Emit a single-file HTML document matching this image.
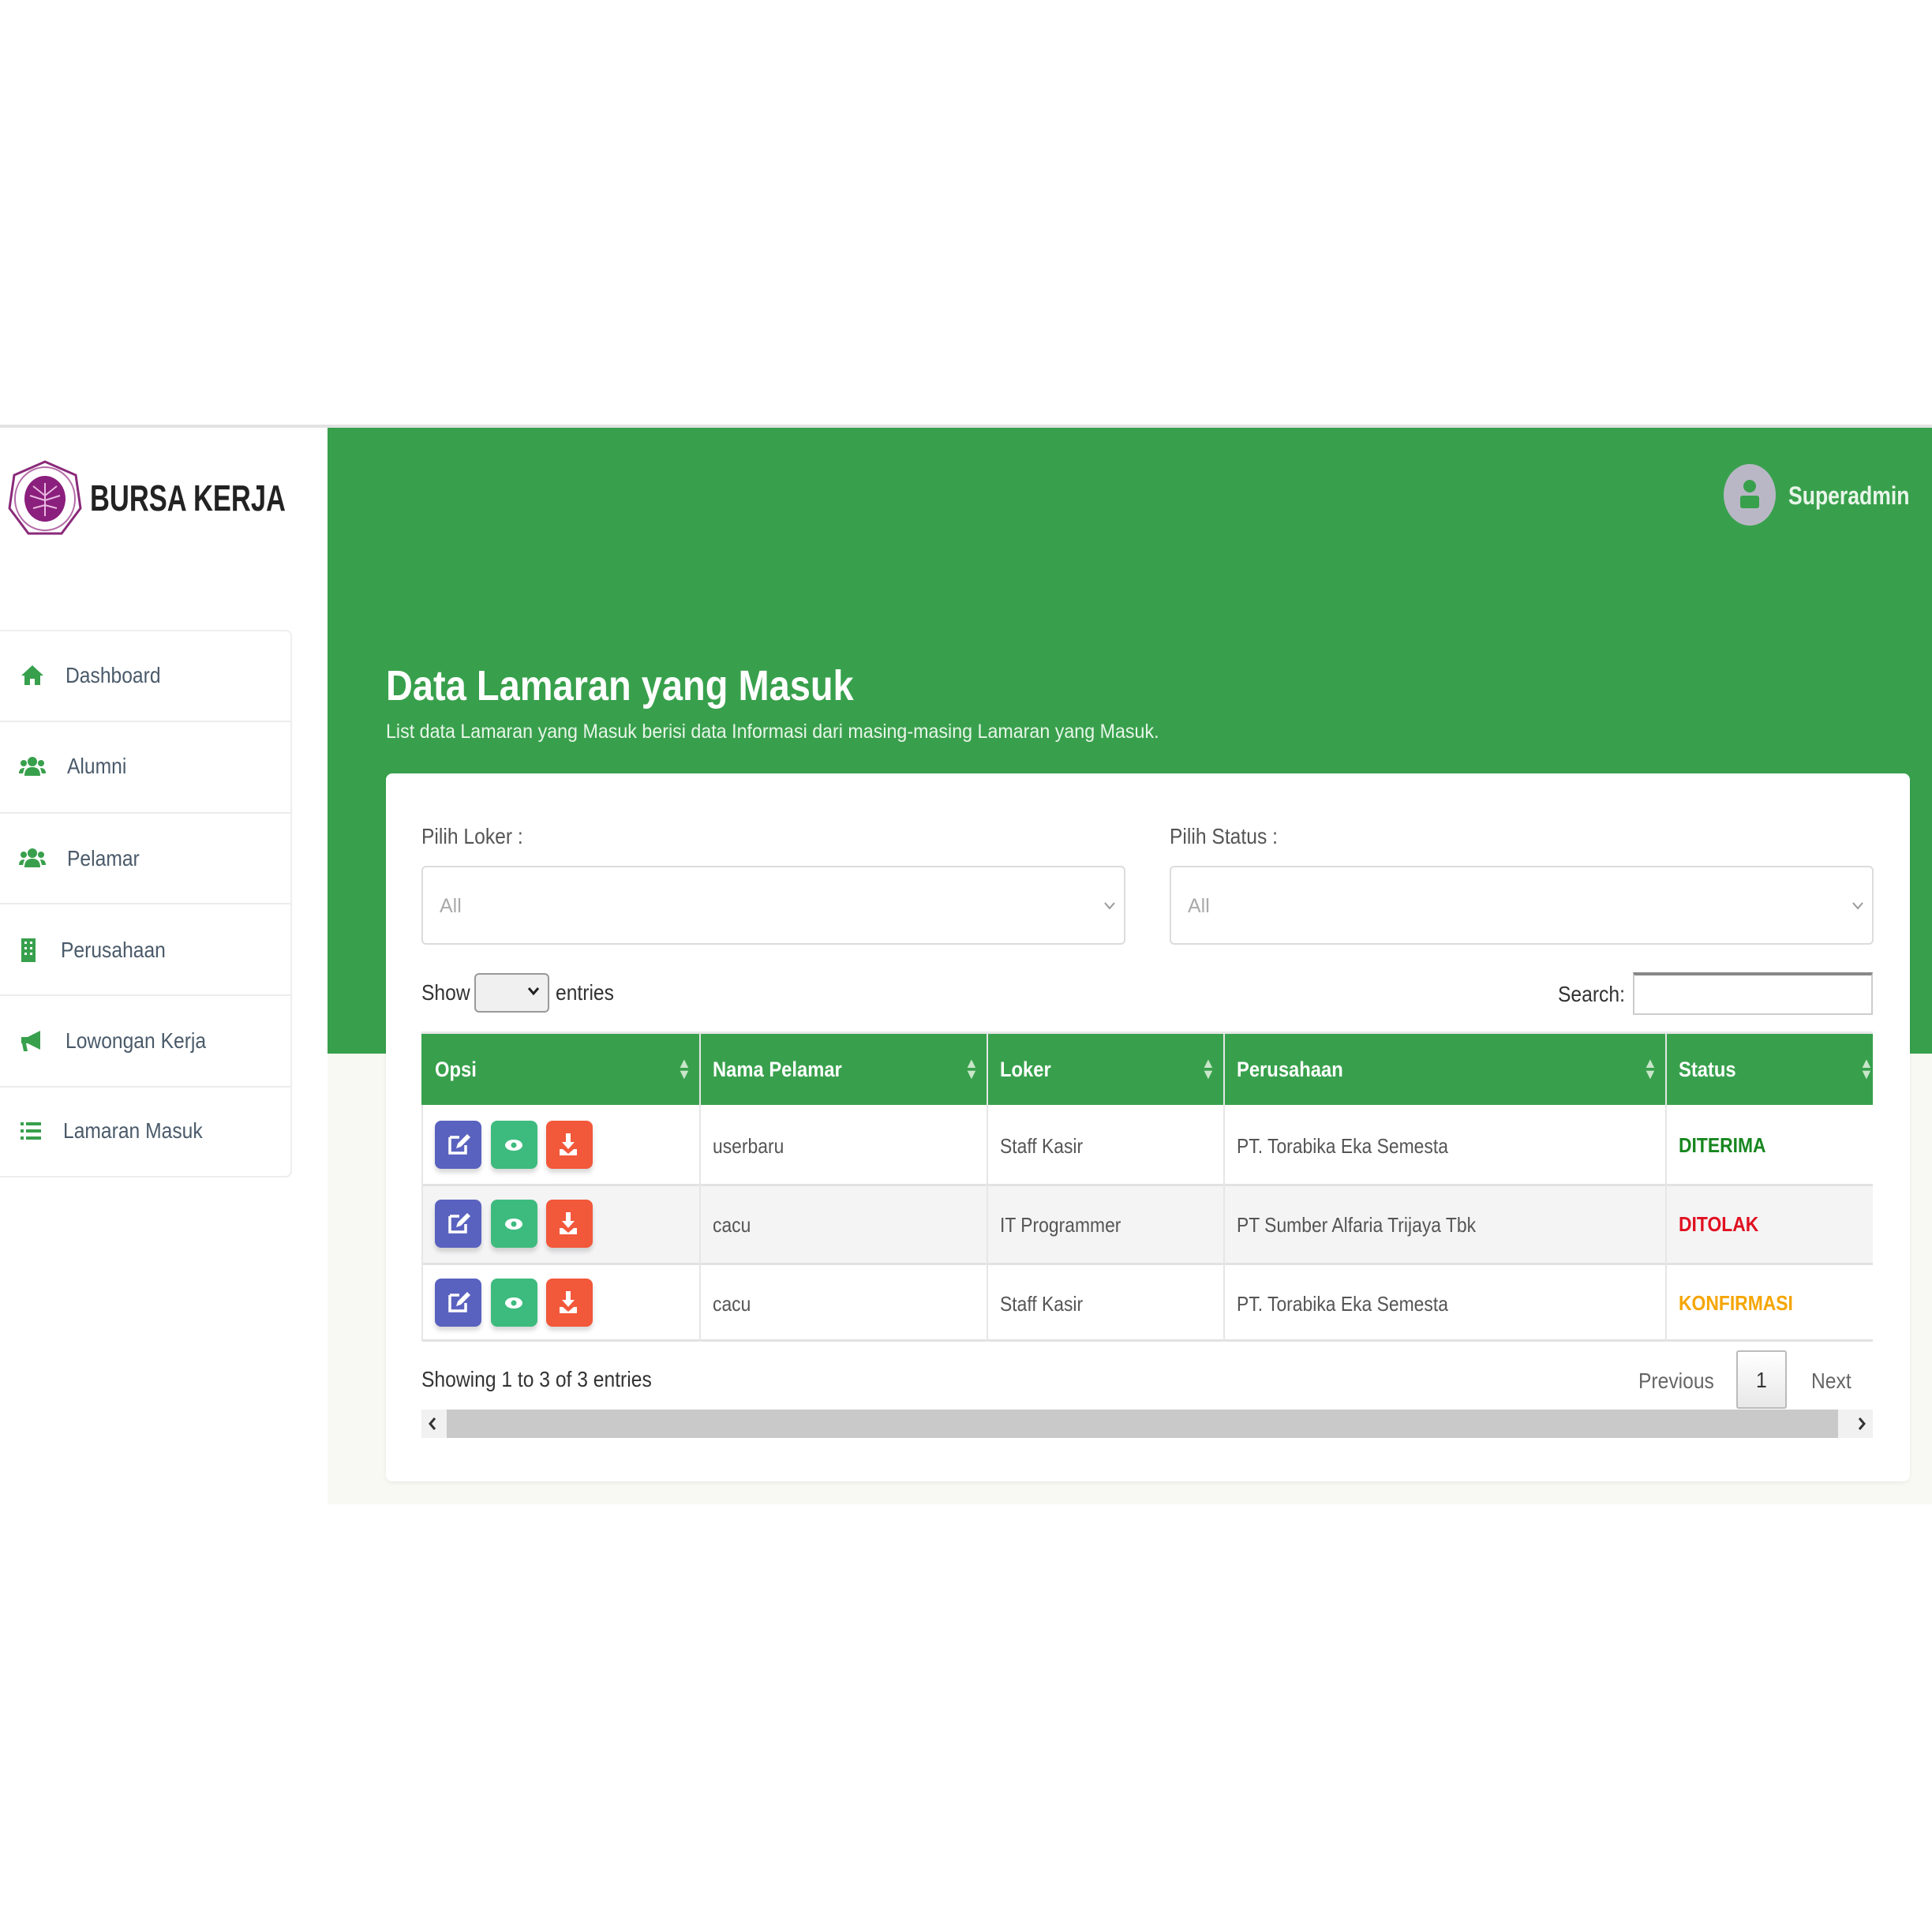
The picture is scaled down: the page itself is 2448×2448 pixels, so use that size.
<!DOCTYPE html>
<html><head><meta charset="utf-8"><style>
*{margin:0;padding:0;box-sizing:border-box}
body{width:2448px;height:2448px;background:#fff;position:relative;overflow:hidden;font-family:"Liberation Sans",sans-serif;color:#555}
.a{position:absolute;white-space:nowrap}
.n{transform:scaleX(.88);transform-origin:0 0}
.topline{left:0;top:538px;width:2448px;height:4px;background:#e2e2e2}
.green{left:415px;top:542px;width:2033px;height:793px;background:#38a04c}
.beige{left:415px;top:1335px;width:2033px;height:571px;background:#f8f9f3}
.menu{left:0;top:798px;width:370px;height:694px;background:#fff;border:2px solid #eeeeee;border-left:none;border-radius:0 8px 8px 0}
.mi{left:0;width:368px;height:2px;background:#ececec}
.mt{font-size:28px;color:#4a5a6a;transform:translateY(-50%) scaleX(.88);transform-origin:0 50%}
.card{left:489px;top:980px;width:1931px;height:897px;background:#fff;border-radius:8px;box-shadow:0 2px 6px rgba(0,0,0,.06)}
.lbl{font-size:28px;color:#555;transform:scaleX(.88);transform-origin:0 0}
.sel{border:2px solid #dcdcdc;border-radius:6px;height:100px;background:#fff}
.th{color:#fff;font-weight:bold;font-size:27px;top:1340px;transform:scaleX(.88);transform-origin:0 0}
.td{font-size:26px;color:#555;transform:scaleX(.88);transform-origin:0 0}
.btn{width:59px;height:61px;border-radius:8px;box-shadow:0 5px 6px rgba(0,0,0,.15)}
.vl{width:2px;background:#e6e6e6}
.sort{color:#c8e6c9;font-size:18px;line-height:14px;text-align:center}
</style></head><body>
<div class="a topline"></div>
<div class="a green"></div>
<div class="a beige"></div>

<svg class="a" style="left:8px;top:582px" width="98" height="100" viewBox="0 0 98 100">
<path d="M49 3 L88 20 L94 62 L70 94 L28 94 L4 62 L10 20 Z" fill="#fff" stroke="#8a2a7a" stroke-width="3"/>
<ellipse cx="49" cy="50" rx="38" ry="40" fill="none" stroke="#b46aa8" stroke-width="2"/>
<ellipse cx="49" cy="50" rx="26" ry="29" fill="#8b1f7d"/>
<path d="M49 30 L49 72 M49 46 L34 34 M49 46 L64 34 M49 52 L30 46 M49 52 L68 46 M49 58 L34 62 M49 58 L64 62" stroke="#e8b8e0" stroke-width="2"/>
</svg>
<div class="a" style="left:114px;top:604px;font-size:46px;font-weight:bold;color:#222;transform:scaleX(.75);transform-origin:0 0">BURSA KERJA</div>

<div class="a" style="left:2184px;top:588px;width:66px;height:78px;border-radius:50%;background:#b9b7c6"></div>
<svg class="a" style="left:2203px;top:606px" width="28" height="42" viewBox="0 0 28 42"><circle cx="14" cy="10" r="8" fill="#38a04c"/><rect x="2" y="22" width="24" height="16" rx="3" fill="#38a04c"/></svg>
<div class="a" style="left:2266px;top:610px;font-size:32px;font-weight:bold;color:#e8f5e9;transform:scaleX(.83);transform-origin:0 0">Superadmin</div>

<div class="a menu"></div>
<div class="a mi" style="top:913px"></div>
<div class="a mi" style="top:1029px"></div>
<div class="a mi" style="top:1144px"></div>
<div class="a mi" style="top:1260px"></div>
<div class="a mi" style="top:1376px"></div>
<svg class="a" style="left:26px;top:841px" width="30" height="28" viewBox="0 0 30 28"><path d="M15 2 L29 15 L25 15 L25 27 L18 27 L18 19 L12 19 L12 27 L5 27 L5 15 L1 15 Z" fill="#38a04c"/></svg>
<div class="a mt" style="left:83px;top:856px">Dashboard</div>
<svg class="a" style="left:24px;top:958px" width="34" height="26" viewBox="0 0 34 26"><circle cx="17" cy="7" r="6" fill="#38a04c"/><circle cx="6" cy="9" r="4" fill="#38a04c"/><circle cx="28" cy="9" r="4" fill="#38a04c"/><path d="M7 25 Q7 14 17 14 Q27 14 27 25Z M0 22 Q0 15 7 15 L5 22Z M34 22 Q34 15 27 15 L29 22Z" fill="#38a04c"/></svg>
<div class="a mt" style="left:85px;top:971px">Alumni</div>
<svg class="a" style="left:24px;top:1074px" width="34" height="26" viewBox="0 0 34 26"><circle cx="17" cy="7" r="6" fill="#38a04c"/><circle cx="6" cy="9" r="4" fill="#38a04c"/><circle cx="28" cy="9" r="4" fill="#38a04c"/><path d="M7 25 Q7 14 17 14 Q27 14 27 25Z M0 22 Q0 15 7 15 L5 22Z M34 22 Q34 15 27 15 L29 22Z" fill="#38a04c"/></svg>
<div class="a mt" style="left:85px;top:1088px">Pelamar</div>
<svg class="a" style="left:27px;top:1189px" width="18" height="30" viewBox="0 0 18 30"><rect width="18" height="30" fill="#38a04c"/><rect x="4" y="4" width="3" height="3" fill="#fff"/><rect x="11" y="4" width="3" height="3" fill="#fff"/><rect x="4" y="11" width="3" height="3" fill="#fff"/><rect x="11" y="11" width="3" height="3" fill="#fff"/><rect x="4" y="18" width="3" height="3" fill="#fff"/><rect x="11" y="18" width="3" height="3" fill="#fff"/></svg>
<div class="a mt" style="left:77px;top:1204px">Perusahaan</div>
<svg class="a" style="left:25px;top:1305px" width="30" height="28" viewBox="0 0 30 28"><path d="M2 9 L10 9 L26 1 L26 25 L10 17 L8 17 L10 27 L5 27 L3 17 L2 17 Z" fill="#38a04c"/></svg>
<div class="a mt" style="left:83px;top:1319px">Lowongan Kerja</div>
<svg class="a" style="left:26px;top:1422px" width="26" height="22" viewBox="0 0 26 22"><g fill="#38a04c"><rect width="4" height="4"/><rect y="9" width="4" height="4"/><rect y="18" width="4" height="4"/><rect x="7" width="19" height="4"/><rect x="7" y="9" width="19" height="4"/><rect x="7" y="18" width="19" height="4"/></g></svg>
<div class="a mt" style="left:80px;top:1433px">Lamaran Masuk</div>

<div class="a" style="left:489px;top:838px;font-size:54px;font-weight:bold;color:#fff;transform:scaleX(.87);transform-origin:0 0">Data Lamaran yang Masuk</div>
<div class="a" style="left:489px;top:913px;font-size:25px;color:#e8f5e9;transform:scaleX(.93);transform-origin:0 0">List data Lamaran yang Masuk berisi data Informasi dari masing-masing Lamaran yang Masuk.</div>

<div class="a card"></div>
<div class="a lbl" style="left:534px;top:1044px">Pilih Loker :</div>
<div class="a lbl" style="left:1482px;top:1044px">Pilih Status :</div>
<div class="a sel" style="left:534px;top:1097px;width:892px"></div>
<div class="a sel" style="left:1482px;top:1097px;width:892px"></div>
<div class="a" style="left:557px;top:1134px;font-size:25px;color:#aaa">All</div>
<div class="a" style="left:1505px;top:1134px;font-size:25px;color:#aaa">All</div>
<svg class="a" style="left:1398px;top:1142px" width="16" height="12" viewBox="0 0 16 12"><path d="M2 2 L8 9 L14 2" stroke="#999" stroke-width="2" fill="none"/></svg>
<svg class="a" style="left:2346px;top:1142px" width="16" height="12" viewBox="0 0 16 12"><path d="M2 2 L8 9 L14 2" stroke="#999" stroke-width="2" fill="none"/></svg>

<div class="a lbl" style="left:534px;top:1242px;color:#333">Show</div>
<div class="a" style="left:601px;top:1233px;width:95px;height:50px;border:2px solid #999;border-radius:6px;background:#f0f0f0"></div>
<svg class="a" style="left:668px;top:1250px" width="16" height="12" viewBox="0 0 16 12"><path d="M2 2 L8 9 L14 2" stroke="#222" stroke-width="3" fill="none"/></svg>
<div class="a lbl" style="left:704px;top:1242px;color:#333">entries</div>
<div class="a lbl" style="left:1974px;top:1244px;color:#333">Search:</div>
<div class="a" style="left:2069px;top:1232px;width:304px;height:54px;border:2px solid #ccc;border-top:4px solid #888"></div>

<div class="a" style="left:534px;top:1307px;width:1839px;height:93px;background:#38a04c;border-top:3px solid #e8e8e8"></div>
<div class="a" style="left:534px;top:1400px;width:1839px;height:100px;background:#fff"></div>
<div class="a" style="left:534px;top:1500px;width:1839px;height:100px;background:#f4f4f5;border-top:3px solid #e2e2e2"></div>
<div class="a" style="left:534px;top:1600px;width:1839px;height:100px;background:#fff;border-top:3px solid #e2e2e2;border-bottom:3px solid #e2e2e2"></div>
<div class="a vl" style="left:534px;top:1400px;height:300px"></div>
<div class="a vl" style="left:886px;top:1307px;height:393px"></div>
<div class="a vl" style="left:1250px;top:1307px;height:393px"></div>
<div class="a vl" style="left:1550px;top:1307px;height:393px"></div>
<div class="a vl" style="left:2110px;top:1307px;height:393px"></div>

<div class="a th" style="left:551px">Opsi</div>
<div class="a th" style="left:903px">Nama Pelamar</div>
<div class="a th" style="left:1267px">Loker</div>
<div class="a th" style="left:1567px">Perusahaan</div>
<div class="a th" style="left:2127px">Status</div>
<div class="a sort" style="left:858px;top:1340px">▲<br>▼</div>
<div class="a sort" style="left:1222px;top:1340px">▲<br>▼</div>
<div class="a sort" style="left:1522px;top:1340px">▲<br>▼</div>
<div class="a sort" style="left:2082px;top:1340px">▲<br>▼</div>
<div class="a sort" style="left:2356px;top:1340px">▲<br>▼</div>

<div class="a btn" style="left:551px;top:1420px;background:#5a62bf"></div>
<div class="a btn" style="left:622px;top:1420px;background:#3dbb7e"></div>
<div class="a btn" style="left:692px;top:1420px;background:#f2583a"></div>
<div class="a btn" style="left:551px;top:1520px;background:#5a62bf"></div>
<div class="a btn" style="left:622px;top:1520px;background:#3dbb7e"></div>
<div class="a btn" style="left:692px;top:1520px;background:#f2583a"></div>
<div class="a btn" style="left:551px;top:1620px;background:#5a62bf"></div>
<div class="a btn" style="left:622px;top:1620px;background:#3dbb7e"></div>
<div class="a btn" style="left:692px;top:1620px;background:#f2583a"></div>
<svg class="a" style="left:551px;top:1420px" width="200" height="280" viewBox="0 0 200 280">
<defs><g id="i"><path d="M19 21 L31 21 M19 21 L19 41 L39 41 L39 31" stroke="#fff" stroke-width="3.5" fill="none"/><path d="M27 35 L29 29 L41 17 L45 21 L33 33 Z" fill="#fff"/>
<ellipse cx="100" cy="31" rx="11" ry="7" fill="#fff"/><circle cx="100" cy="31" r="3.5" fill="#3dbb7e"/>
<path d="M166 16 L172 16 L172 27 L177 27 L169 36 L161 27 L166 27 Z M158 36 L162 36 L169 42 L176 36 L180 36 L180 44 L158 44 Z" fill="#fff"/></g></defs>
<use href="#i"/><use href="#i" y="100"/><use href="#i" y="200"/>
</svg>

<div class="a td" style="left:903px;top:1437px">userbaru</div>
<div class="a td" style="left:1267px;top:1437px">Staff Kasir</div>
<div class="a td" style="left:1567px;top:1437px">PT. Torabika Eka Semesta</div>
<div class="a td" style="left:2127px;top:1436px;color:#17861f;font-weight:bold">DITERIMA</div>
<div class="a td" style="left:903px;top:1537px">cacu</div>
<div class="a td" style="left:1267px;top:1537px">IT Programmer</div>
<div class="a td" style="left:1567px;top:1537px">PT Sumber Alfaria Trijaya Tbk</div>
<div class="a td" style="left:2127px;top:1536px;color:#e01020;font-weight:bold">DITOLAK</div>
<div class="a td" style="left:903px;top:1637px">cacu</div>
<div class="a td" style="left:1267px;top:1637px">Staff Kasir</div>
<div class="a td" style="left:1567px;top:1637px">PT. Torabika Eka Semesta</div>
<div class="a td" style="left:2127px;top:1636px;color:#f5a500;font-weight:bold">KONFIRMASI</div>

<div class="a lbl" style="left:534px;top:1732px;color:#333">Showing 1 to 3 of 3 entries</div>
<div class="a lbl" style="left:2076px;top:1734px;color:#666">Previous</div>
<div class="a" style="left:2200px;top:1711px;width:64px;height:74px;border:2px solid #bbb;border-radius:3px;background:linear-gradient(#fff,#e8e8e8)"></div>
<div class="a lbl" style="left:2225px;top:1733px;color:#333">1</div>
<div class="a lbl" style="left:2295px;top:1734px;color:#666">Next</div>
<div class="a" style="left:534px;top:1786px;width:1839px;height:36px;background:#f1f1f1"></div>
<div class="a" style="left:566px;top:1786px;width:1763px;height:36px;background:#c9c9c9"></div>
<svg class="a" style="left:541px;top:1794px" width="14" height="20" viewBox="0 0 14 20"><path d="M10 3 L4 10 L10 17" stroke="#333" stroke-width="3" fill="none"/></svg>
<svg class="a" style="left:2352px;top:1794px" width="14" height="20" viewBox="0 0 14 20"><path d="M4 3 L10 10 L4 17" stroke="#333" stroke-width="3" fill="none"/></svg>
</body></html>
